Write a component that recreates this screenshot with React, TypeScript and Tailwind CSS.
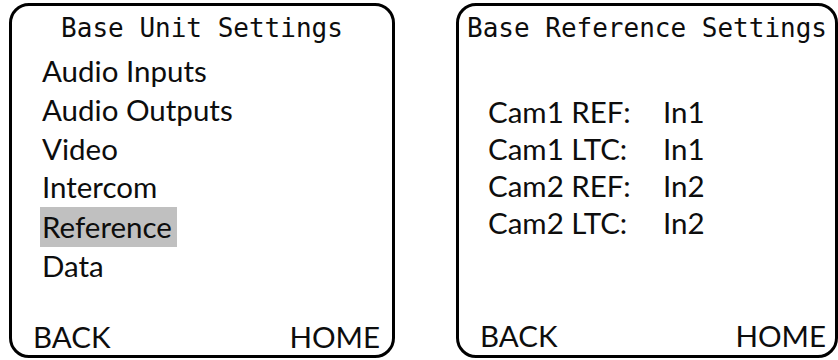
const menuItems = ["Audio Inputs", "Audio Outputs", "Video", "Intercom", "Reference", "Data"];
const selected = "Reference";

const refRows = [
  { label: "Cam1 REF:", value: "In1" },
  { label: "Cam1 LTC:", value: "In1" },
  { label: "Cam2 REF:", value: "In2" },
  { label: "Cam2 LTC:", value: "In2" },
];

const mono = { fontFamily: "'DejaVu Sans Mono', monospace" };

export default function App() {
  return (
    <div
      className="w-[838px] h-[360px] bg-white text-[#0d0d0d] flex gap-[61px] pt-[3px] pl-[9px] overflow-hidden"
      style={{ fontFamily: "Lato, 'Noto Sans', sans-serif" }}
    >
      {/* Base unit menu screen */}
      <div className="w-[386px] h-[355px] shrink-0 border-[3px] border-black rounded-[20px] flex flex-col">
        <div className="pt-[7px] text-center text-[26px] leading-[30px]" style={mono}>
          Base Unit Settings
        </div>
        <div className="mt-[9px] pl-[30px] text-[29.5px] leading-[38.8px]">
          {menuItems.map((item) =>
            item === selected ? (
              <div key={item}>
                <span className="inline-block -ml-[2px] pl-[2px] pr-[5px] leading-[40px] bg-[#c0c0c0]">
                  {item}
                </span>
              </div>
            ) : (
              <div key={item}>{item}</div>
            )
          )}
        </div>
        <div className="mt-auto flex justify-between pl-[21px] pr-[12px] pb-[1px] text-[29.5px] leading-[34px]">
          <span>BACK</span>
          <span>HOME</span>
        </div>
      </div>

      {/* Base reference screen */}
      <div className="w-[382px] h-[355px] shrink-0 border-[3px] border-black rounded-[20px] flex flex-col">
        <div className="pt-[7px] text-center text-[26px] leading-[30px] whitespace-nowrap" style={mono}>
          Base Reference Settings
        </div>
        <div className="mt-[50px] pl-[29px] text-[29.5px] leading-[37px]">
          {refRows.map((row) => (
            <div key={row.label} className="flex">
              <span className="w-[175px]">{row.label}</span>
              <span>{row.value}</span>
            </div>
          ))}
        </div>
        <div className="mt-auto flex justify-between pl-[21px] pr-[9px] pb-[2px] text-[29.5px] leading-[34px]">
          <span>BACK</span>
          <span>HOME</span>
        </div>
      </div>
    </div>
  );
}
